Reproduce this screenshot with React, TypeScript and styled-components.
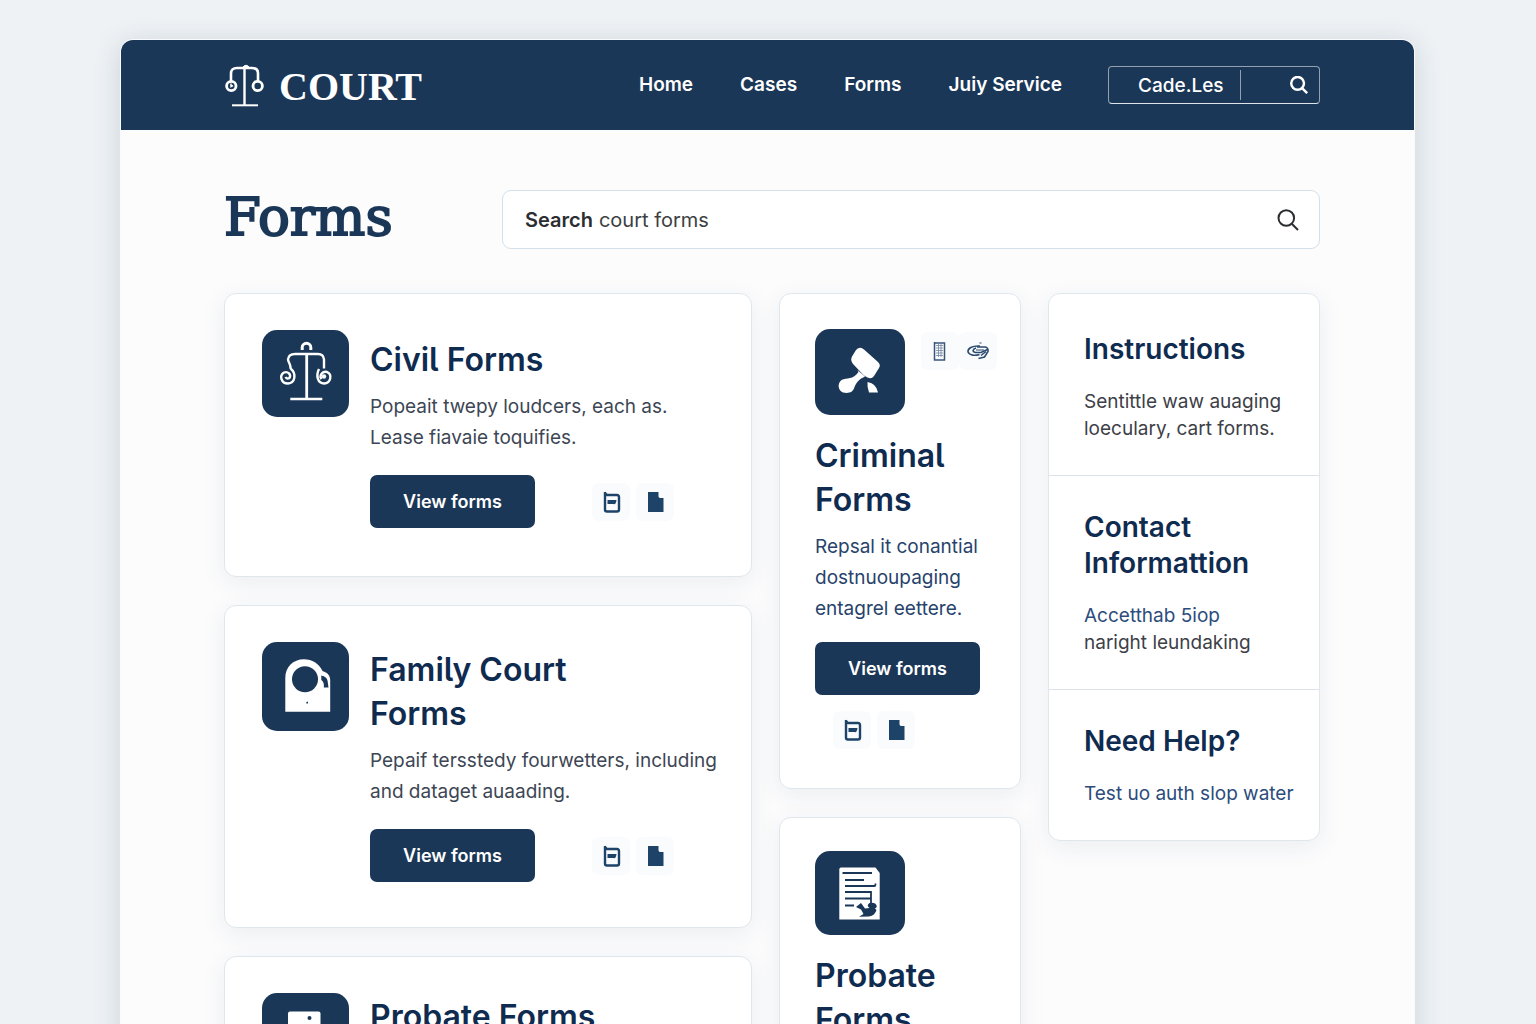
import React from "react";
import styled, { createGlobalStyle, css } from "styled-components";

const navy = "#1b3757";
const ink = "#0f2b50";
const line = "#dfe7ec";
const sans = `Inter, "Liberation Sans", sans-serif`;

const GlobalStyle = createGlobalStyle`
  *, *::before, *::after { box-sizing: border-box; }
  body {
    margin: 0;
    background: #eef2f5;
    color: #343c48;
    font-family: ${sans};
    font-size: 19px;
  }
  h1, h2, h3, p { margin: 0; }
`;

const Frame = styled.div`
  margin: 40px 122px 0 121px;
  border-radius: 12px 12px 0 0;
  background: #fcfcfd;
  box-shadow: 0 0 0 1px #f8fafb, 0 4px 28px rgba(40, 62, 84, 0.18);
`;

const Header = styled.header`
  display: flex;
  align-items: center;
  height: 90px;
  padding: 0 94px 0 104px;
  border-radius: 12px 12px 0 0;
  background: ${navy};
  color: #fff;
`;

const Brand = styled.a`
  display: flex;
  align-items: center;
  gap: 14px;
  color: inherit;
  text-decoration: none;
  font: bold 40px/48px "Liberation Serif", serif;
`;

const BrandName = styled.span`
  padding-top: 4px;
`;

const Nav = styled.nav`
  display: flex;
  gap: 47px;
  margin-left: auto;
`;

const NavLink = styled.a`
  color: inherit;
  font-weight: 600;
  line-height: 28px;
  white-space: nowrap;
  text-decoration: none;
`;

const HeaderSearch = styled.form`
  display: flex;
  align-items: center;
  width: 212px;
  height: 38px;
  margin-left: 46px;
  border: 1px solid #93a0b0;
  border-bottom-color: #dfe4ea;
  border-radius: 4px;
`;

const HeaderInput = styled.input`
  width: 132px;
  height: 30px;
  padding: 0 0 0 29px;
  border: 0;
  border-right: 1px solid #93a0b0;
  background: none;
  color: #fff;
  font: 500 19px/28px ${sans};
  outline: none;
`;

const IconButton = styled.button<{ $pad: number }>`
  display: flex;
  align-items: center;
  justify-content: center;
  margin-left: auto;
  padding: 0 ${(p) => p.$pad}px;
  border: 0;
  background: none;
  color: inherit;
  cursor: pointer;
`;

const Main = styled.main`
  padding: 60px 94px 60px 103px;
`;

const TitleRow = styled.div`
  display: grid;
  grid-template-columns: 251px minmax(0, 1fr);
  gap: 27px;
  align-items: start;
`;

const PageTitle = styled.h1`
  color: ${navy};
  font: 400 53px/54px "DejaVu Serif", serif;
  -webkit-text-stroke: 2px ${navy};
`;

const SearchBox = styled.form`
  display: flex;
  align-items: center;
  height: 59px;
  padding-left: 22px;
  border: 1px solid #d3e0e9;
  border-radius: 9px;
  background: #fff;
  color: #2b2d31;
  font-size: 20px;
`;

const SearchLabel = styled.label`
  font-weight: 600;
`;

const SearchInput = styled.input`
  flex: 1;
  min-width: 0;
  padding: 0 6px;
  border: 0;
  background: none;
  color: inherit;
  font: 400 20px/28px ${sans};
  outline: none;
  &::placeholder { color: #3c3f44; opacity: 1; }
`;

const Columns = styled.div`
  display: grid;
  grid-template-columns: minmax(0, 1fr) 242px 272px;
  gap: 27px;
  align-items: start;
  margin-top: 44px;
`;

const Stack = styled.div`
  display: grid;
  gap: 28px;
`;

const panel = css`
  border: 1px solid ${line};
  border-radius: 12px;
  background: #fff;
  box-shadow: 0 6px 24px rgba(40, 62, 84, 0.08);
`;

const WideCard = styled.article<{ $compact?: boolean }>`
  ${panel}
  display: flex;
  align-items: flex-start;
  gap: 21px;
  padding: ${(p) => (p.$compact ? "36px 20px 45px 37px" : "36px 20px 48px 37px")};
`;

const WideBody = styled.div<{ $offset: number }>`
  flex: 1;
  min-width: 0;
  padding-top: ${(p) => p.$offset}px;
`;

const NarrowCard = styled.article<{ $short?: boolean }>`
  ${panel}
  padding: ${(p) => (p.$short ? "33px 0 39px 35px" : "35px 0 39px 35px")};
`;

const NarrowTop = styled.div`
  display: flex;
  align-items: flex-start;
  gap: 16px;
  margin-bottom: 19px;
`;

const Tile = styled.div<{ $w: number; $h: number }>`
  flex: none;
  width: ${(p) => p.$w}px;
  height: ${(p) => p.$h}px;
  border-radius: 15px;
  background: ${navy};
  color: #fff;
  svg { display: block; }
`;

const CardTitle = styled.h2`
  color: ${ink};
  font-size: 32px;
  font-weight: 600;
  line-height: 44px;
  font-feature-settings: "cv05";
`;

const CardText = styled.p<{ $blue?: boolean }>`
  margin-top: 9px;
  color: ${(p) => (p.$blue ? "#27436b" : "#3d4654")};
  line-height: 31px;
  white-space: nowrap;
`;

const Actions = styled.div<{ $stacked?: boolean }>`
  display: flex;
  align-items: center;
  gap: 57px;
  margin-top: 22px;
  ${(p) =>
    p.$stacked &&
    css`
      flex-direction: column;
      align-items: flex-start;
      gap: 16px;
      margin-top: 18px;
    `}
`;

const ViewButton = styled.button`
  width: 165px;
  height: 53px;
  border: 0;
  border-radius: 7px;
  background: ${navy};
  color: #fff;
  font: 600 18px/28px ${sans};
  cursor: pointer;
`;

const Chips = styled.div<{ $inset?: boolean; $tight?: boolean }>`
  display: flex;
  gap: ${(p) => (p.$tight ? 0 : 6)}px;
  margin: ${(p) => (p.$tight ? "3px 0 0" : p.$inset ? "0 0 0 18px" : "0")};
`;

const Chip = styled.button`
  display: flex;
  align-items: center;
  justify-content: center;
  width: 38px;
  height: 38px;
  padding: 0;
  border: 0;
  border-radius: 7px;
  background: #fafbfd;
  color: #1e4369;
  cursor: pointer;
`;

const Sidebar = styled.aside`
  ${panel}
  padding-top: 4px;
`;

const SideSection = styled.section`
  padding: 33px 16px 33px 35px;
  & + & { border-top: 1px solid #d9e3e9; }
`;

const SideTitle = styled.h3`
  margin-bottom: 21px;
  color: ${ink};
  font-size: 28px;
  font-weight: 600;
  line-height: 36px;
`;

const SideText = styled.p`
  color: #3d4047;
  line-height: 27px;
  white-space: nowrap;
`;

const SideLink = styled.a`
  color: #2c4c7c;
  text-decoration: none;
`;

const LogoIcon = () => (
  <svg width="40" height="43" viewBox="0 0 40 43" fill="none" stroke="currentColor" aria-hidden="true">
    <path d="M6 17V9.500Q6 4 12 4H27Q33 4 33 9.500V17" strokeWidth="2.600" />
    <circle cx="6.300" cy="22" r="4.700" strokeWidth="2.800" />
    <circle cx="32.700" cy="22" r="4.700" strokeWidth="2.800" />
    <path d="M6 19.500v3l2-1" strokeWidth="1.500" />
    <path d="M19.500 3V41" strokeWidth="2.400" />
    <path d="M7 41.300H33" strokeWidth="2" />
    <path d="M17.500 3.500q3.500-4.500 7 0z" fill="currentColor" />
  </svg>
);

const SearchIcon = ({ size, weight }: { size: number; weight: number }) => (
  <svg width={size} height={size} viewBox="0 0 22 22" fill="none" stroke="currentColor" strokeWidth={weight} aria-hidden="true">
    <circle cx="9.300" cy="9" r="7.800" />
    <path d="M15 15l6 6" />
  </svg>
);

const ScalesIcon = () => (
  <svg width="87" height="87" viewBox="0 0 87 87" fill="none" stroke="currentColor" strokeWidth="2.400" aria-hidden="true">
    <path d="M40.200 20v-2.500a4.300 4.300 0 0 1 8.600 0V20" strokeWidth="3" />
    <path d="M28.500 39C29.500 35 26 32 26 29.500Q26.500 24 33 24H56Q61.500 24 62 29.500V38.500" />
    <path d="M28.500 38.500C35 44 33 53 26 53.500C19 53.500 17 45.500 22 42.500C26 41 29.500 44.500 27.500 48Q25 49.500 23.500 47" />
    <path d="M57 39C53.500 46 56 53.500 62 53.500C69 53 70.500 44.500 65 42C60 40.500 57 46 59.500 49" />
    <circle cx="62" cy="46.500" r="2.200" fill="currentColor" stroke="none" />
    <path d="M44.700 24V68.500" strokeWidth="2.800" />
    <path d="M28.300 69H60.300" />
  </svg>
);

const FamilyIcon = () => (
  <svg width="87" height="89" viewBox="0 0 87 89" aria-hidden="true">
    <path d="M23.300 69.700V36C23.300 25 31 17.300 42 17.300C50 17.300 57 21.500 60.500 29C65.500 30.500 68.200 33.500 68.200 38V69.700Z" fill="currentColor" />
    <circle cx="43" cy="37.300" r="13" fill={navy} />
    <path d="M59.300 33.500Q65 34.500 65.600 39L66.500 45.500H61.800Q62.500 40 59.300 38Z" fill={navy} />
    <path d="M43.800 61l1.500-1.500.8.500-.5 1.800z" fill={navy} />
  </svg>
);

const GavelIcon = () => (
  <svg width="90" height="86" viewBox="0 0 90 86" fill="currentColor" aria-hidden="true">
    <path d="M41 21Q45 17 49 20.500L63 33Q66 36 64 39L59 47Q56.500 50.500 52.500 48.500L49 46.500L38.500 35.500Q35 31.500 37 27.500Z" />
    <path d="M42.500 41L50 47.500C45 50 42 52 39.500 58C38 64 33 64.500 28 63.500C23 61.500 22 54.500 26.500 51C32 48.500 38 51 43.500 43Z" />
    <path d="M52.500 53Q61.500 54.500 63 63.500H54Q52 58.500 52.500 53Z" />
  </svg>
);

const WillIcon = () => (
  <svg width="90" height="84" viewBox="0 0 90 84" aria-hidden="true">
    <path d="M26 16.500H60.500L64.700 22V68.500H24.300V18.500Q24.300 16.500 26 16.500Z" fill="currentColor" />
    <path d="M27.500 22H57M30 29H49M30 35H59.500Q60.500 35 60.500 32.500M30 41H56V52M30 47.500H56M30 54.500H39" fill="none" stroke={navy} strokeWidth="1.800" />
    <path d="M41 56L46 52L50 57.500L54.500 57Q51 54.500 54.500 52Q61.500 51 61.800 56L60 57.500L61.500 59Q60 64.500 54 65.500L44 65.800L48.500 63L46 58.500Z" fill={navy} />
  </svg>
);

const PanelIcon = () => (
  <svg width="87" height="87" viewBox="0 0 87 87" aria-hidden="true">
    <path d="M28 18.500H56.500Q58.500 18.500 58.500 20.500V69H26V20.500Q26 18.500 28 18.500Z" fill="currentColor" />
    <circle cx="47.500" cy="25" r="2" fill={navy} />
  </svg>
);

const NoteIcon = () => (
  <svg width="22" height="22" viewBox="0 0 22 22" fill="none" stroke="currentColor" aria-hidden="true">
    <path d="M5 1V18.500Q5 20.500 7 20.500H17Q19 20.500 19 18.500V6Q19 4 17 4H7L4.500 1.500" strokeWidth="2.400" />
    <path d="M7.500 9h9q-.5 5-3 4h-6z" fill="currentColor" stroke="none" />
  </svg>
);

const FileIcon = () => (
  <svg width="22" height="22" viewBox="0 0 22 22" fill="currentColor" aria-hidden="true">
    <path d="M4 1H14.500V5.500Q15 7 16.500 7H19.500V21H4Z" />
  </svg>
);

const LedgerIcon = () => (
  <svg width="22" height="22" viewBox="0 0 22 22" fill="none" stroke="#7287a1" aria-hidden="true">
    <path d="M5.500 2V20H15.500V3H5" stroke="#38557a" strokeWidth="1.500" />
    <path d="M7 5.500h7M7 8h7M7 10.500h7M7 13h7M7 15.500h7M9.500 4v13M12 4v13" strokeWidth=".8" />
  </svg>
);

const KnotIcon = () => (
  <svg width="24" height="22" viewBox="0 0 24 22" fill="none" stroke="#2b4b70" strokeWidth="1.600" aria-hidden="true">
    <path d="M14 6C6 5.500 1.500 8.500 2 12C3.500 15.500 9 16 13.500 14.500" />
    <path d="M10 8C6.500 9 6 12 9.500 12.500H15L21.500 9.500" />
    <path d="M11 7H19Q22.500 7.500 22 11.500L18.500 17L12.500 18.500M15 15.500L20 11.500" />
    <path d="M13.500 3h2M10 10h8" strokeWidth="1.200" />
  </svg>
);

const FormatChips = ({ inset }: { inset?: boolean }) => (
  <Chips $inset={inset}>
    <Chip type="button" aria-label="Open online form"><NoteIcon /></Chip>
    <Chip type="button" aria-label="Download file"><FileIcon /></Chip>
  </Chips>
);

export default function App() {
  return (
    <>
      <GlobalStyle />
      <Frame>
        <Header>
          <Brand href="#"><LogoIcon /><BrandName>COURT</BrandName></Brand>
          <Nav>
            <NavLink href="#">Home</NavLink>
            <NavLink href="#">Cases</NavLink>
            <NavLink href="#">Forms</NavLink>
            <NavLink href="#">Juiy Service</NavLink>
          </Nav>
          <HeaderSearch>
            <HeaderInput aria-label="Site search" defaultValue="Cade.Les" />
            <IconButton type="button" aria-label="Search site" $pad={11}><SearchIcon size={18} weight={3} /></IconButton>
          </HeaderSearch>
        </Header>
        <Main>
          <TitleRow>
            <PageTitle>Forms</PageTitle>
            <SearchBox>
              <SearchLabel htmlFor="form-search">Search</SearchLabel>
              <SearchInput id="form-search" placeholder="court forms" />
              <IconButton type="button" aria-label="Search forms" $pad={20}>
                <SearchIcon size={22} weight={2} />
              </IconButton>
            </SearchBox>
          </TitleRow>
          <Columns>
            <Stack>
              <WideCard>
                <Tile $w={87} $h={87}><ScalesIcon /></Tile>
                <WideBody $offset={8}>
                  <CardTitle>Civil Forms</CardTitle>
                  <CardText>Popeait twepy loudcers, each as.<br />Lease fiavaie toquifies.</CardText>
                  <Actions><ViewButton type="button">View forms</ViewButton><FormatChips /></Actions>
                </WideBody>
              </WideCard>
              <WideCard $compact>
                <Tile $w={87} $h={89}><FamilyIcon /></Tile>
                <WideBody $offset={6}>
                  <CardTitle>Family Court<br />Forms</CardTitle>
                  <CardText>Pepaif tersstedy fourwetters, including<br />and dataget auaading.</CardText>
                  <Actions><ViewButton type="button">View forms</ViewButton><FormatChips /></Actions>
                </WideBody>
              </WideCard>
              <WideCard $compact>
                <Tile $w={87} $h={87}><PanelIcon /></Tile>
                <WideBody $offset={2}>
                  <CardTitle>Probate Forms</CardTitle>
                </WideBody>
              </WideCard>
            </Stack>
            <Stack>
              <NarrowCard>
                <NarrowTop>
                  <Tile $w={90} $h={86}><GavelIcon /></Tile>
                  <Chips $tight>
                    <Chip type="button" aria-label="Form list"><LedgerIcon /></Chip>
                    <Chip type="button" aria-label="Related links"><KnotIcon /></Chip>
                  </Chips>
                </NarrowTop>
                <CardTitle>Criminal<br />Forms</CardTitle>
                <CardText $blue>Repsal it conantial<br />dostnuoupaging<br />entagrel eettere.</CardText>
                <Actions $stacked><ViewButton type="button">View forms</ViewButton><FormatChips inset /></Actions>
              </NarrowCard>
              <NarrowCard $short>
                <NarrowTop>
                  <Tile $w={90} $h={84}><WillIcon /></Tile>
                </NarrowTop>
                <CardTitle>Probate<br />Forms</CardTitle>
              </NarrowCard>
            </Stack>
            <Sidebar>
              <SideSection>
                <SideTitle>Instructions</SideTitle>
                <SideText>Sentittle waw auaging<br />loeculary, cart forms.</SideText>
              </SideSection>
              <SideSection>
                <SideTitle>Contact<br />Informattion</SideTitle>
                <SideText><SideLink href="#">Accetthab 5iop</SideLink><br />naright leundaking</SideText>
              </SideSection>
              <SideSection>
                <SideTitle>Need Help?</SideTitle>
                <SideText><SideLink href="#">Test uo auth slop water</SideLink></SideText>
              </SideSection>
            </Sidebar>
          </Columns>
        </Main>
      </Frame>
    </>
  );
}
